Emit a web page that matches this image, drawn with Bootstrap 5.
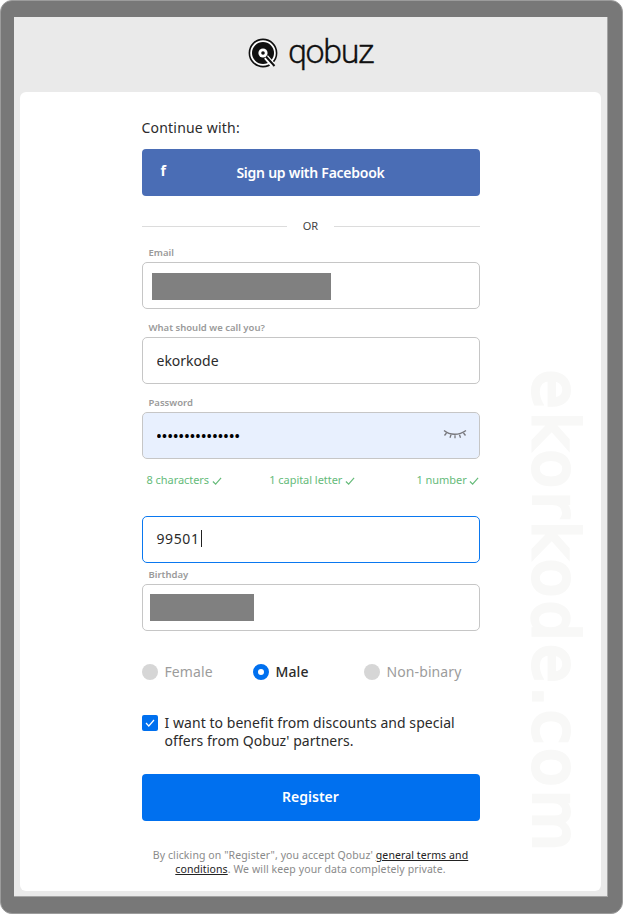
<!DOCTYPE html>
<html lang="en">
<head>
    <meta charset="utf-8">
    <title>Qobuz - Register</title>
    <link rel="stylesheet" href="https://cdn.jsdelivr.net/npm/bootstrap@5.3.2/dist/css/bootstrap.min.css">
    <style>
        html, body {
            margin: 0;
            width: 623px;
            height: 914px;
            overflow: hidden;
            background-color: #fff;
            font-family: "Noto Sans", sans-serif;
        }
        .shot-frame {
            width: 623px;
            height: 914px;
            background-color: #787878;
            border: 1px solid #9c9c9c;
            border-radius: 12px;
            padding: 16px 14px 16px 13px;
        }
        .shot-inner {
            height: 880px;
            background-color: #eaeaea;
            border-right: 1px solid #a4a4a4;
            border-bottom: 1px solid #a4a4a4;
        }
        .logo-bar {
            height: 75px;
            padding-bottom: 2px;
            gap: 10px;
        }
        .logo-word {
            font-family: Roboto, sans-serif;
            font-weight: 300;
            font-size: 34px;
            line-height: 36px;
            color: #111;
            letter-spacing: -1.4px;
            -webkit-text-stroke: .3px #111;
            margin-top: -5px;
        }
        .sheet {
            position: relative;
            margin: 0 6px;
            height: 799px;
            background-color: #fff;
            border-radius: 6px;
            overflow: hidden;
        }
        .stamp {
            position: absolute;
            left: 497px;
            top: 278px;
            writing-mode: vertical-rl;
            font-family: "DejaVu Sans", sans-serif;
            font-size: 62px;
            line-height: 76px;
            letter-spacing: 4px;
            color: #f8f8f7;
            -webkit-text-stroke: 4px #f8f8f7;
            white-space: nowrap;
        }
        .form-col {
            position: relative;
            width: 338px;
            margin: 0 auto;
            padding-top: 27px;
        }
        .lead-in {
            font-size: 14px;
            line-height: 18px;
            letter-spacing: .2px;
            color: #2b2b2b;
            margin-bottom: 12px;
        }
        .btn-fb, .btn-fb:hover {
            position: relative;
            height: 47px;
            background-color: #4a6db5;
            color: #fff;
            font-size: 14px;
            font-weight: 600;
            letter-spacing: -.25px;
            border: 0;
            border-radius: 4px;
        }
        .fb-mark {
            position: absolute;
            left: 19px;
            top: 12px;
            font-size: 14px;
            line-height: 20px;
            font-weight: 700;
        }
        .or-row {
            height: 14px;
            margin: 23px 0 14px;
            font-size: 11px;
            line-height: 14px;
            color: #444;
        }
        .or-row i {
            flex: 1;
            height: 1px;
            background-color: #dcdcdc;
        }
        .or-row span {
            width: 47px;
            text-align: center;
        }
        .field-label {
            display: block;
            margin: 0 0 3px 7px;
            height: 12px;
            font-size: 9.5px;
            line-height: 12px;
            font-weight: 600;
            color: #9a9a9a;
        }
        .field-gap {
            margin-bottom: 13px;
        }
        .field-box.form-control {
            height: 47px;
            padding: 0 14px;
            font-size: 14px;
            color: #2b2b2b;
            border: 1px solid #c6c6c6;
            border-radius: 5px;
            box-shadow: none;
        }
        .field-box.is-filled {
            background-color: #e8f0fe;
            color: #000;
            font-size: 13px;
            font-weight: 700;
            letter-spacing: .7px;
        }
        .field-box.is-active {
            border-color: #0a78f0;
            line-height: 43px;
            letter-spacing: .6px;
        }
        .type-caret {
            display: inline-block;
            width: 1px;
            height: 17px;
            margin-left: 1px;
            vertical-align: -3px;
            background-color: #222;
        }
        .blackout {
            position: absolute;
            background-color: #808080;
            height: 27px;
        }
        .blackout-mail { left: 10px; top: 11px; width: 179px; }
        .blackout-date { left: 8px; top: 10px; width: 104px; }
        .eye-toggle {
            position: absolute;
            right: 13px;
            top: 17px;
        }
        .rule-row {
            height: 14px;
            margin: 14px 0 29px;
            padding: 0 0 0 5px;
            font-size: 11px;
            line-height: 14px;
            letter-spacing: -.05px;
            color: #66bb7a;
        }
        .rule-mid {
            margin-right: 14px;
        }
        .birthday-label {
            margin-top: 6px;
        }
        .radio-row {
            margin: 32px 0 33px;
            font-size: 14px;
            line-height: 18px;
            letter-spacing: .1px;
            color: #9c9c9c;
        }
        .radio-opt {
            width: 111px;
            gap: 7px;
        }
        .radio-opt b {
            font-weight: 500;
            color: #2b2b2b;
        }
        .radio-dot {
            width: 16px;
            height: 16px;
            border-radius: 50%;
            background-color: #d6d6d6;
        }
        .radio-dot.is-on {
            background-color: #fff;
            border: 5px solid #0070ef;
        }
        .opt-in {
            gap: 7px;
            font-size: 14px;
            line-height: 18px;
            letter-spacing: .05px;
            color: #2b2b2b;
            margin-bottom: 24px;
        }
        .tick-box {
            flex: none;
            width: 16px;
            height: 16px;
            margin-top: 1px;
            border-radius: 2px;
            background-color: #0070ef;
        }
        .btn.btn-register, .btn.btn-register:hover {
            height: 47px;
            padding: 0 0 3px;
            background-color: #0070ef;
            color: #fff;
            font-size: 14px;
            font-weight: 600;
            border: 0;
            border-radius: 4px;
        }
        .legal {
            margin: 27px 0 0;
            font-size: 10.5px;
            line-height: 14px;
            letter-spacing: .1px;
            text-align: center;
            color: #8a8a8a;
        }
        .legal a {
            color: #222;
        }
    </style>
</head>
<body>
<div class="shot-frame">
<div class="shot-inner">
    <div class="logo-bar d-flex align-items-center justify-content-center">
        <svg width="30" height="32" viewBox="0 0 30 32">
            <circle cx="15" cy="15" r="13.6" fill="#fff" stroke="#111" stroke-width="1.6"/>
            <circle cx="15" cy="15" r="11" fill="#111"/>
            <circle cx="15" cy="15" r="4.6" fill="#fff"/>
            <circle cx="15" cy="15" r="1.8" fill="#111"/>
            <path d="M18 19l7 8" stroke="#fff" stroke-width="5"/>
            <path d="M18 18.500l8.500 9.500" stroke="#111" stroke-width="2"/>
        </svg>
        <span class="logo-word">qobuz</span>
    </div>
    <div class="sheet">
        <div class="stamp">ekorkode.com</div>
        <form class="form-col">
            <div class="lead-in">Continue with:</div>
            <button type="button" class="btn btn-fb w-100 p-0">
                <span class="fb-mark">f</span>Sign up with Facebook
            </button>
            <div class="or-row d-flex align-items-center">
                <i></i><span>OR</span><i></i>
            </div>

            <label class="field-label">Email</label>
            <div class="position-relative field-gap">
                <input type="text" class="form-control field-box">
                <div class="blackout blackout-mail"></div>
            </div>

            <label class="field-label">What should we call you?</label>
            <div class="field-gap">
                <input type="text" class="form-control field-box" value="ekorkode">
            </div>

            <label class="field-label">Password</label>
            <div class="position-relative">
                <input type="password" class="form-control field-box is-filled" value="abcdefghijklmno">
                <svg class="eye-toggle" width="24" height="12" viewBox="0 0 24 12" fill="none" stroke="#77777c" stroke-width="1.300">
                    <path d="M1 1.500c6 5 15 5 22 0"/>
                    <path d="M3.500 4l-2 2.500M8 5.800l-1 3M12 6.300v3M16.500 5.800l1 3M20.500 4l2 2.500"/>
                </svg>
            </div>
            <div class="rule-row d-flex justify-content-between">
                <span>8 characters
                    <svg width="10" height="9" viewBox="0 0 11 9" fill="none" stroke="#66bb7a" stroke-width="1.300"><path d="M1 4.500l3 3 6-7"/></svg></span>
                <span class="rule-mid">1 capital letter
                    <svg width="10" height="9" viewBox="0 0 11 9" fill="none" stroke="#66bb7a" stroke-width="1.300"><path d="M1 4.500l3 3 6-7"/></svg></span>
                <span>1 number
                    <svg width="10" height="9" viewBox="0 0 11 9" fill="none" stroke="#66bb7a" stroke-width="1.300"><path d="M1 4.500l3 3 6-7"/></svg></span>
            </div>

            <div class="form-control field-box is-active">99501<span class="type-caret"></span></div>

            <label class="field-label birthday-label">Birthday</label>
            <div class="position-relative">
                <input type="text" class="form-control field-box">
                <div class="blackout blackout-date"></div>
            </div>

            <div class="radio-row d-flex">
                <div class="radio-opt d-flex align-items-center"><span class="radio-dot"></span>Female</div>
                <div class="radio-opt d-flex align-items-center"><span class="radio-dot is-on"></span><b>Male</b></div>
                <div class="radio-opt d-flex align-items-center"><span class="radio-dot"></span>Non-binary</div>
            </div>

            <div class="opt-in d-flex">
                <span class="tick-box d-flex align-items-center justify-content-center">
                    <svg width="10" height="8" viewBox="0 0 10 8" fill="none" stroke="#fff" stroke-width="1.200"><path d="M1 4l2.800 3L9 1"/></svg>
                </span>
                <span>I want to benefit from discounts and special offers from Qobuz' partners.</span>
            </div>

            <button type="button" class="btn btn-register w-100">Register</button>

            <p class="legal">By clicking on "Register", you accept Qobuz' <a href="#">general terms and</a><br><a href="#">conditions</a>. We will keep your data completely private.</p>
        </form>
    </div>
</div>
</div>
<script src="https://cdn.jsdelivr.net/npm/bootstrap@5.3.2/dist/js/bootstrap.bundle.min.js"></script>
</body>
</html>
